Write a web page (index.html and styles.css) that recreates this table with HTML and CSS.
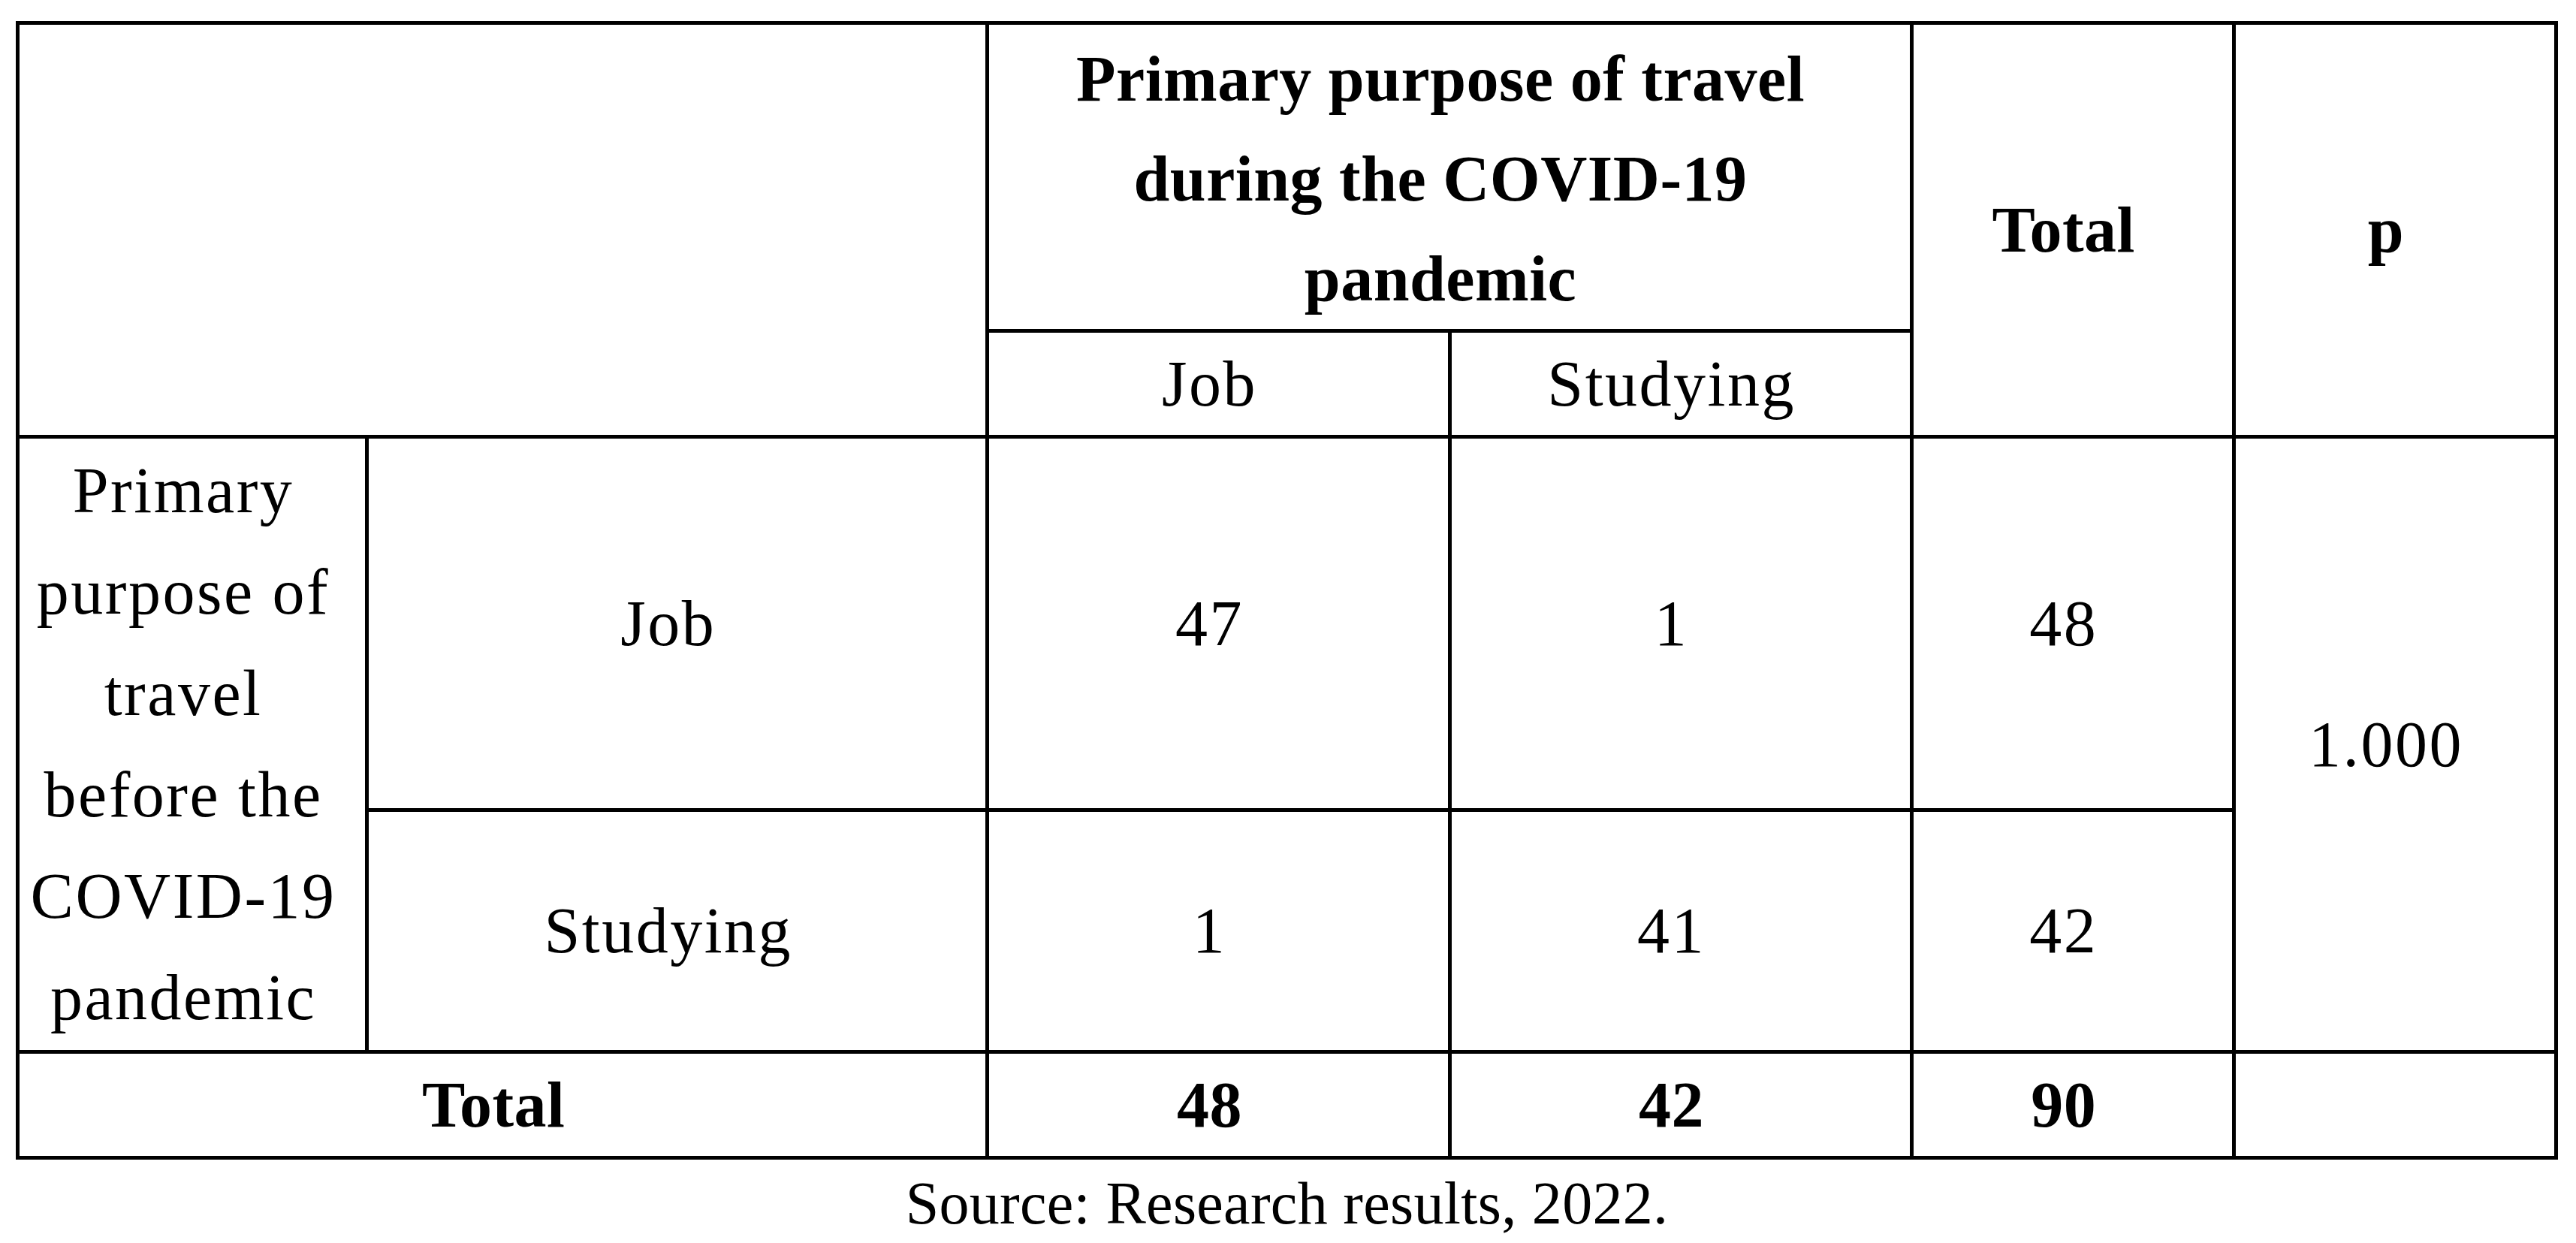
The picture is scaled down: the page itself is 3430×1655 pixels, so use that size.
FILE: index.html
```html
<!DOCTYPE html>
<html lang="en">
<head>
  <meta charset="UTF-8">
  <title>Primary purpose of travel before and during COVID-19</title>
  <link rel="stylesheet" href="styles.css">
</head>
<body>
  <div class="page">
    <table class="crosstab">
      <colgroup>
        <col class="col-side">
        <col class="col-label">
        <col class="col-value">
        <col class="col-value">
        <col class="col-narrow">
        <col class="col-narrow">
      </colgroup>
      <tr class="row-head">
        <td colspan="2" rowspan="2"></td>
        <th class="group" colspan="2">Primary purpose of travel<br>during the COVID-19<br>pandemic</th>
        <th rowspan="2">Total</th>
        <th rowspan="2">p</th>
      </tr>
      <tr class="row-sub">
        <td>Job</td>
        <td>Studying</td>
      </tr>
      <tr class="row-job">
        <td class="side" rowspan="2">Primary<br>purpose of<br>travel<br>before the<br>COVID-19<br>pandemic</td>
        <td>Job</td>
        <td>47</td>
        <td>1</td>
        <td>48</td>
        <td rowspan="2">1.000</td>
      </tr>
      <tr class="row-study">
        <td>Studying</td>
        <td>1</td>
        <td>41</td>
        <td>42</td>
      </tr>
      <tr class="row-total">
        <td colspan="2">Total</td>
        <td>48</td>
        <td>42</td>
        <td>90</td>
        <td></td>
      </tr>
    </table>
    <p class="source">Source: Research results, 2022.</p>
  </div>
</body>
</html>
```

FILE: styles.css
```css
body {
  margin: 0;
  padding: 0;
  background-color: #fff;
  color: #000;
  font-family: "Liberation Serif", "Times New Roman", serif;
}

.page {
  padding: 28px 0 0 21px;
  width: 3385px;
}

.crosstab {
  width: 3385px;
  border-collapse: collapse;
  table-layout: fixed;
  font-size: 86px;
  line-height: 135px;
}

.col-side { width: 465px; }
.col-label { width: 826px; }
.col-value { width: 615px; }
.col-narrow { width: 429px; }

.crosstab th,
.crosstab td {
  border: 5px solid #000;
  padding: 0 24px 0 0;
  text-align: center;
  vertical-align: middle;
  font-weight: normal;
  letter-spacing: 2.5px;
}

.crosstab th,
.row-total td {
  font-weight: bold;
  letter-spacing: 0.5px;
}

.crosstab th.group {
  padding-top: 6px;
  line-height: 133px;
}

.row-head { height: 410px; }
.row-sub { height: 141px; }
.row-job { height: 497px; }
.row-study { height: 322px; }
.row-total { height: 141px; }

.source {
  margin: 10px 0 0;
  text-align: center;
  font-size: 80px;
  line-height: 96px;
  letter-spacing: 0.3px;
}
```
